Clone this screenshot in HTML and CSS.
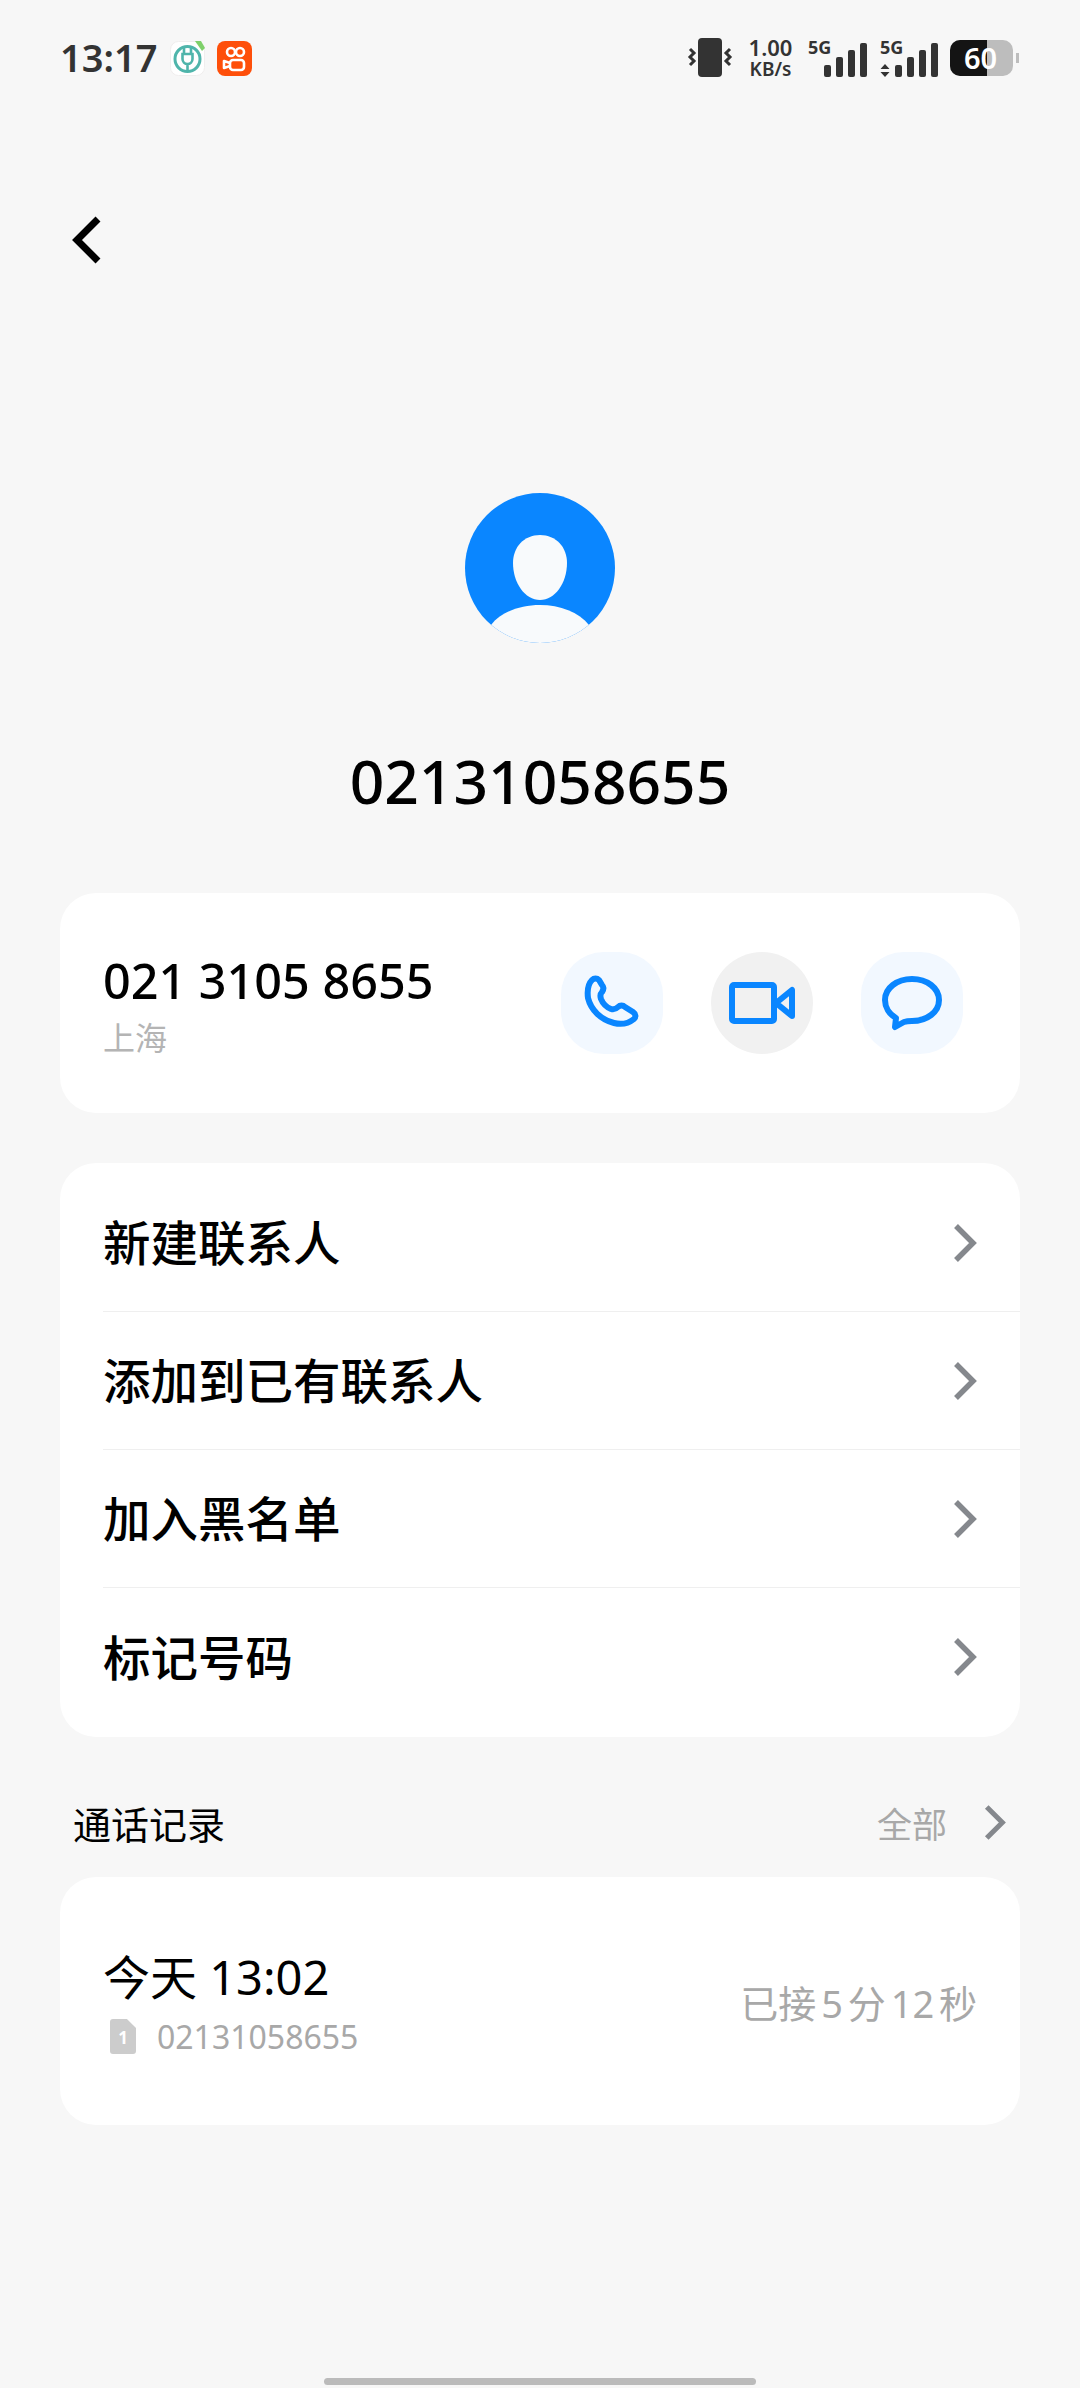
FILE: index.html
```html
<!DOCTYPE html>
<html lang="zh-CN">
<head>
  <meta charset="utf-8">
  <title>02131058655</title>
  <link rel="stylesheet" href="styles.css">
</head>
<body>
  <div class="page">
    <header class="status-bar">
      <div class="status-left">
        <span class="clock">13:17</span>
        <svg class="app-icon" viewBox="0 0 35 35">
          <rect x="0.5" y="0.5" width="34" height="34" rx="8" fill="#fff" stroke="#f0eeee"/>
          <circle cx="17.500" cy="18" r="12.500" fill="none" stroke="#4fb5ab" stroke-width="3"/>
          <path d="M14 5v9M21 5v9M12.500 13h10v5a5 5 0 0 1-10 0zM17.500 22v9" fill="none" stroke="#4fb5ab" stroke-width="2.600"/>
          <path d="M25 0h6l4 7-3 3z" fill="#7ed06a"/>
        </svg>
        <svg class="app-icon" viewBox="0 0 35 35">
          <rect width="35" height="35" rx="8" fill="#fe4f0a"/>
          <g fill="none" stroke="#fff" stroke-width="2.600" stroke-linejoin="round">
            <circle cx="14" cy="11" r="4"/>
            <circle cx="23" cy="11" r="4"/>
            <rect x="13" y="19" width="14" height="10" rx="3"/>
            <path d="M13 22l-6-2v7l6-2"/>
          </g>
        </svg>
      </div>
      <div class="status-right">
        <svg class="vibrate" viewBox="0 0 46 40">
          <rect x="11" y="0" width="24" height="39" rx="4" fill="#333"/>
          <path d="M3 11l4 4-4 4 4 4-4 4M43 11l-4 4 4 4-4 4 4 4" fill="none" stroke="#333" stroke-width="3"/>
        </svg>
        <div class="speed"><span>1.00</span><span class="speed-unit">KB/s</span></div>
        <div class="signal">
          <span class="signal-label">5G</span>
          <span class="bar bar-1"></span><span class="bar bar-2"></span><span class="bar bar-3"></span><span class="bar bar-4"></span>
        </div>
        <div class="signal signal-data">
          <span class="signal-label">5G</span>
          <svg class="updown" viewBox="0 0 10 13"><path d="M5 0l4.500 5h-9zM5 13l4.500-5h-9z" fill="#333"/></svg>
          <span class="bar bar-1"></span><span class="bar bar-2"></span><span class="bar bar-3"></span><span class="bar bar-4"></span>
        </div>
        <div class="battery">
          <div class="battery-body"><span class="battery-fill"></span><span class="battery-text">60</span></div>
          <span class="battery-tip"></span>
        </div>
      </div>
    </header>

    <div class="nav">
      <svg class="back" viewBox="0 0 30 48"><path d="M26 3L5 24l21 21" fill="none" stroke="#000" stroke-width="7"/></svg>
    </div>

    <section class="profile">
      <svg class="avatar" viewBox="0 0 150 150">
        <defs><clipPath id="avatar-clip"><circle cx="75" cy="75" r="75"/></clipPath></defs>
        <circle cx="75" cy="75" r="75" fill="#0a86ff"/>
        <g clip-path="url(#avatar-clip)" fill="#f8fafc">
          <path d="M75 42C91 42 102 54 102 70C102 90 90 107 75 107C60 107 48 90 48 70C48 54 59 42 75 42z"/>
          <path d="M26 132c10-13 29-20 49-20s39 7 49 20v18H26z"/>
        </g>
      </svg>
      <h1 class="name">02131058655</h1>
    </section>

    <section class="card number-card">
      <div class="number-info">
        <div class="number">021 3105 8655</div>
        <div class="region">上海</div>
      </div>
      <div class="actions">
        <div class="action">
          <svg viewBox="0 0 56 56" class="action-icon"><path d="M8 5c2-2 5-2 7 0l3 5c2 2 2 4 0 7-2 2-2 4-1 7 2 5 5 8 10 10 3 1 5 0 7-2 2-2 5-2 7 0l8 5c3 2 3 5 1 7-5 4-12 6-20 4C17 45 7 35 4 23 3 15 4 9 8 5z" fill="none" stroke="#0a86ff" stroke-width="6" stroke-linejoin="round"/></svg>
        </div>
        <div class="action action-muted">
          <svg viewBox="0 0 66 42" class="action-icon action-video"><rect x="3" y="3" width="42" height="36" rx="2" fill="none" stroke="#0a86ff" stroke-width="6"/><path d="M47 21l16-13v26z" fill="none" stroke="#0a86ff" stroke-width="6" stroke-linejoin="round"/></svg>
        </div>
        <div class="action">
          <svg viewBox="0 0 60 55" class="action-icon action-chat"><path d="M30 3c15 0 27 9 27 21S45 45 30 45c-3 0-5 0-8 1l-9 5 1-9C7 38 3 31 3 24 3 12 15 3 30 3z" fill="none" stroke="#0a86ff" stroke-width="6" stroke-linejoin="round"/></svg>
        </div>
      </div>
    </section>

    <section class="card menu-card">
      <div class="menu-row">
        <span>新建联系人</span>
        <svg class="chevron" viewBox="0 0 24 40"><path d="M3 3l17 17L3 37" fill="none" stroke="#85888d" stroke-width="5.500"/></svg>
      </div>
      <div class="menu-row">
        <span>添加到已有联系人</span>
        <svg class="chevron" viewBox="0 0 24 40"><path d="M3 3l17 17L3 37" fill="none" stroke="#85888d" stroke-width="5.500"/></svg>
      </div>
      <div class="menu-row">
        <span>加入黑名单</span>
        <svg class="chevron" viewBox="0 0 24 40"><path d="M3 3l17 17L3 37" fill="none" stroke="#85888d" stroke-width="5.500"/></svg>
      </div>
      <div class="menu-row">
        <span>标记号码</span>
        <svg class="chevron" viewBox="0 0 24 40"><path d="M3 3l17 17L3 37" fill="none" stroke="#85888d" stroke-width="5.500"/></svg>
      </div>
    </section>

    <div class="section-head">
      <span class="section-title">通话记录</span>
      <span class="section-more">全部
        <svg class="chevron" viewBox="0 0 24 40"><path d="M3 3l17 17L3 37" fill="none" stroke="#85888d" stroke-width="5.500"/></svg>
      </span>
    </div>

    <section class="card log-card">
      <div class="log-info">
        <div class="log-time">今天 13:02</div>
        <div class="log-number">
          <span class="sim">1</span>
          <span>02131058655</span>
        </div>
      </div>
      <div class="log-status">已接 5 分 12 秒</div>
    </section>

    <div class="home-bar"></div>
  </div>
</body>
</html>
```

FILE: styles.css
```css
:root {
  --bg-color: #f7f7f7;
  --card-color: #ffffff;
  --blue: #0a86ff;
  --grey-text: #a8a8a8;
  --dark: #333333;
}

body {
  margin: 0;
  background-color: var(--bg-color);
  color: #000;
  font-family: "Noto Sans", "Noto Sans CJK SC", sans-serif;
}

.page {
  width: 1080px;
  height: 2388px;
  display: flex;
  flex-direction: column;
  align-items: center;
  overflow: hidden;
}

/* status bar */
.status-bar {
  width: 100%;
  box-sizing: border-box;
  height: 116px;
  padding: 0 61px 0 60px;
  display: flex;
  justify-content: space-between;
  align-items: center;
  color: var(--dark);
}

.status-left {
  display: flex;
  align-items: center;
  gap: 12px;
}

.clock {
  font-size: 38px;
  font-weight: 600;
  line-height: 50px;
  margin-top: -2px;
  margin-right: 1px;
}

.app-icon {
  width: 35px;
  height: 35px;
}

.status-right {
  display: flex;
  align-items: center;
}

.vibrate {
  width: 46px;
  height: 40px;
  margin-right: 15px;
}

.speed {
  display: flex;
  flex-direction: column;
  align-items: center;
  width: 45px;
  font-size: 22px;
  font-weight: 600;
  line-height: 22px;
}

.speed-unit {
  font-size: 19px;
}

.signal {
  position: relative;
  display: flex;
  align-items: flex-end;
  gap: 5px;
  height: 36px;
  margin-left: 31px;
  margin-top: 2px;
}

.signal-data {
  margin-left: 13px;
}

.signal-label {
  position: absolute;
  left: -16px;
  top: -2px;
  font-size: 18px;
  font-weight: 700;
  line-height: 16px;
}

.signal-data .signal-label {
  left: 0;
}

.updown {
  width: 10px;
  height: 13px;
}

.bar {
  width: 7px;
  background-color: var(--dark);
  border-radius: 2px;
}

.bar-1 { height: 12px; }
.bar-2 { height: 20px; }
.bar-3 { height: 27px; }
.bar-4 { height: 34px; }

.battery {
  display: flex;
  align-items: center;
  gap: 3px;
  margin-left: 12px;
}

.battery-body {
  position: relative;
  width: 63px;
  height: 36px;
  border-radius: 10px;
  background-color: #bdbdbd;
}

.battery-fill {
  position: absolute;
  left: 0;
  top: 0;
  bottom: 0;
  width: 37px;
  border-radius: 10px 0 0 10px;
  background-color: #141414;
}

.battery-text {
  position: absolute;
  left: 14px;
  top: 0;
  color: #fff;
  font-size: 29px;
  font-weight: 600;
  line-height: 36px;
}

.battery-tip {
  width: 3px;
  height: 10px;
  background-color: #bdbdbd;
}

/* back */
.nav {
  width: 100%;
  box-sizing: border-box;
  padding: 100px 0 0 72px;
}

.back {
  display: block;
  width: 30px;
  height: 48px;
}

/* profile */
.profile {
  display: flex;
  flex-direction: column;
  align-items: center;
  margin-top: 229px;
}

.avatar {
  width: 150px;
  height: 150px;
}

.name {
  margin: 98px 0 0;
  font-size: 60.5px;
  font-weight: 500;
  line-height: 80px;
}

/* cards */
.card {
  width: 960px;
  box-sizing: border-box;
  background-color: var(--card-color);
  border-radius: 36px;
}

.number-card {
  margin-top: 72px;
  height: 220px;
  padding: 0 57px 0 43px;
  display: flex;
  justify-content: space-between;
  align-items: center;
}

.number-info {
  padding-top: 6px;
}

.number {
  font-size: 48.5px;
  font-weight: 500;
  line-height: 56px;
}

.region {
  margin-top: 7px;
  color: #b4b4b4;
  font-size: 32px;
  line-height: 46px;
}

.actions {
  display: flex;
  gap: 48px;
}

.action {
  width: 102px;
  height: 102px;
  border-radius: 42%;
  background-color: #f2f8ff;
  display: flex;
  align-items: center;
  justify-content: center;
}

.action-muted {
  border-radius: 50%;
  background-color: #f1f1f1;
}

.action-icon {
  width: 56px;
  height: 56px;
}

.action-video {
  width: 66px;
  height: 42px;
}

.action-chat {
  width: 60px;
  height: 55px;
}

.menu-card {
  margin-top: 50px;
  padding: 11px 0;
}

.menu-row {
  height: 138px;
  margin-left: 43px;
  padding-right: 43px;
  box-sizing: border-box;
  display: flex;
  justify-content: space-between;
  align-items: center;
  font-size: 47.5px;
  border-bottom: 1px solid #efefef;
}

.menu-row span {
  margin-top: -4px;
  font-weight: 500;
}

.menu-row:last-child {
  border-bottom: none;
}

.chevron {
  width: 24px;
  height: 40px;
}

.section-head {
  width: 960px;
  box-sizing: border-box;
  height: 140px;
  padding: 30px 14px 0 13px;
  display: flex;
  justify-content: space-between;
  align-items: center;
}

.section-title {
  font-size: 38px;
}

.section-more {
  display: flex;
  align-items: center;
  gap: 37px;
  color: var(--grey-text);
  font-size: 35px;
}

.section-more .chevron {
  width: 22px;
  height: 37px;
}

.log-card {
  height: 248px;
  padding: 0 43px;
  display: flex;
  justify-content: space-between;
  align-items: center;
}

.log-info {
  padding-top: 6px;
}

.log-time {
  font-size: 47px;
  line-height: 60px;
}

.log-number {
  display: flex;
  align-items: center;
  gap: 21px;
  margin-top: 5px;
  margin-left: 7px;
  color: var(--grey-text);
  font-size: 32px;
  line-height: 50px;
}

.sim {
  width: 26px;
  height: 35px;
  border-radius: 3px;
  background-color: #cccccc;
  clip-path: polygon(0 0, 65% 0, 100% 26%, 100% 100%, 0 100%);
  color: #fff;
  font-size: 17px;
  font-weight: 700;
  line-height: 37px;
  text-align: center;
}

.log-status {
  color: var(--grey-text);
  font-size: 38px;
  word-spacing: -5px;
}

.home-bar {
  width: 432px;
  height: 7px;
  margin-top: auto;
  margin-bottom: 3px;
  border-radius: 4px;
  background-color: #bbbbbb;
}
```
